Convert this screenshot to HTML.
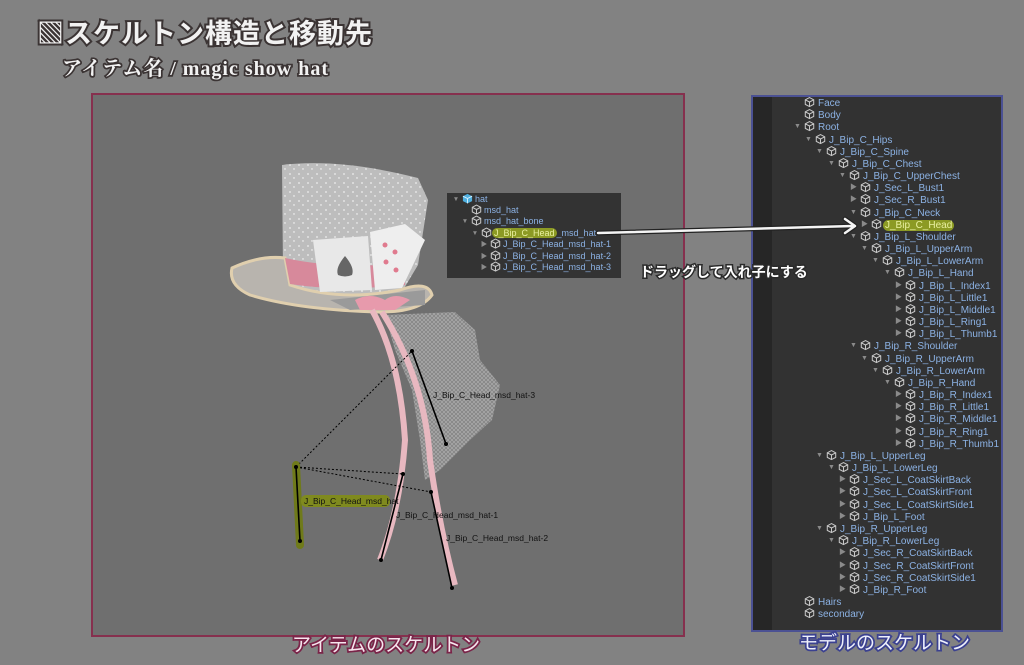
<!DOCTYPE html>
<html><head><meta charset="utf-8"><style>
*{margin:0;padding:0;box-sizing:border-box}
body{width:1024px;height:665px;background:#828282;position:relative;overflow:hidden;font-family:"Liberation Sans","Noto Sans CJK JP",sans-serif}
.abs{position:absolute}
.t{position:absolute;white-space:nowrap;font-family:"Liberation Sans","Noto Sans CJK JP",sans-serif;paint-order:stroke fill}
.r{position:absolute;height:12px;line-height:12px;font-size:10px;color:#8cb2e4;white-space:nowrap}
.r b{position:absolute;left:0;top:0;width:9px;height:12px;line-height:12px;font-size:7px;color:#8a8a8a;font-weight:normal;text-align:center}
.r svg{position:absolute;left:11px;top:-1px;width:11px;height:12px;display:block}
.r span{position:absolute;left:25px;top:1px}
.s{position:absolute;height:11px;line-height:11px;font-size:9px;color:#8cb2e4;white-space:nowrap}
.s b{position:absolute;left:0;top:0;width:8px;font-size:6.5px;color:#8a8a8a;font-weight:normal;text-align:center}
.s svg{position:absolute;left:10px;top:-1px;width:11px;height:11px;display:block}
.s span{position:absolute;left:23px;top:0}
.hl{background:#8c9a24;color:#e9f0a0;border-radius:6px;padding:0 2px;margin-left:-2px}
.s .hl,.r .hl{position:static}
</style></head><body>
<svg width="0" height="0" style="position:absolute"><defs>
<symbol id="c" viewBox="0 0 12 12"><path d="M6 1.2 L10.6 3.6 V8.6 L6 11 L1.4 8.6 V3.6 Z M1.4 3.6 L6 6 L10.6 3.6 M6 6 V11" fill="none" stroke="#c8c8c8" stroke-width="1.1"/></symbol>
<symbol id="h" viewBox="0 0 12 12"><path d="M6 1 L11 3.5 V8.8 L6 11.3 L1 8.8 V3.5 Z" fill="#4fb0e0"/><path d="M1 3.5 L6 6 L11 3.5 M6 6 V11.3" fill="none" stroke="#d9f2ff" stroke-width="1"/></symbol>
</defs></svg>

<div class="t" style="left:37px;top:12px;font-size:27px;letter-spacing:1px;color:#f2f2f2;-webkit-text-stroke:4px #3b3434;font-weight:bold">▧スケルトン構造と移動先</div>
<div class="t" style="left:62px;top:52px;font-size:20px;letter-spacing:1px;color:#f2f2f2;-webkit-text-stroke:3.5px #3b3434;font-weight:bold;font-family:'Liberation Serif','Noto Serif CJK SC',serif">アイテム名 / magic show hat</div>

<div class="abs" style="left:91px;top:93px;width:594px;height:544px;background:#6f6f6f;border:2px solid #86304e"></div>

<div class="abs" style="left:751px;top:95px;width:252px;height:537px;background:#323232;border:2px solid #4b5193"></div>
<div class="abs" style="left:753px;top:97px;width:19px;height:533px;background:#262626"></div>

<svg class="abs" style="left:0;top:0" width="1024" height="665">
<defs><pattern id="net" width="4" height="4" patternUnits="userSpaceOnUse"><rect width="4" height="4" fill="#8a8a8a"/><path d="M0 0L4 4M4 0L0 4" stroke="#b8b8b8" stroke-width=".6"/></pattern>
<pattern id="sp" width="9" height="9" patternUnits="userSpaceOnUse"><rect width="9" height="9" fill="#bdbdbd"/><circle cx="2" cy="3" r=".9" fill="#eee"/><circle cx="6" cy="7" r=".7" fill="#fff"/></pattern></defs>
<path d="M385 315 L455 312 L475 330 L480 360 L500 385 L492 420 L470 440 L440 470 L425 480 L420 440 L412 390 L395 350 Z" fill="url(#net)" opacity=".9"/>
<path d="M282 165 Q340 158 418 178 L428 200 L418 265 L400 295 L300 300 L283 270 Z" fill="url(#sp)"/>
<path d="M232 268 Q260 255 285 258 L290 285 Q340 302 400 290 Q428 280 432 295 Q420 312 380 312 Q300 310 250 295 Q228 285 232 268 Z" fill="#b8b4ae" stroke="#e0cfae" stroke-width="3"/>
<path d="M285 258 Q340 270 405 263 L405 285 Q340 292 290 284 Z" fill="#d7899b"/>
<path d="M313 240 L368 236 L372 290 L320 292 Z" fill="#e8e8e8"/>
<path d="M370 232 L405 224 L425 240 L402 288 L375 290 Z" fill="#eee"/>
<path d="M345 256 Q335 268 338 275 Q345 278 352 275 Q355 268 345 256 Z" fill="#666"/>
<g fill="#e07a8e"><circle cx="385" cy="245" r="2.5"/><circle cx="395" cy="252" r="2.5"/><circle cx="386" cy="262" r="2.5"/><circle cx="396" cy="270" r="2.5"/></g>
<path d="M330 300 L425 290 L425 305 L350 310 Z" fill="#9a9a9a"/>
<path d="M355 300 Q370 292 385 300 Q395 292 410 300 L395 310 L360 310 Z" fill="#e79aac"/>
<path d="M372 310 Q400 360 405 440 Q400 510 380 560" fill="none" stroke="#e8b8c0" stroke-width="6"/>
<path d="M382 312 Q425 380 430 460 Q440 530 455 585" fill="none" stroke="#e8b8c0" stroke-width="6"/>
<g stroke="#000" fill="none">
<path d="M296 467 L412 351 M296 467 L403 474 M296 467 L431 492" stroke-dasharray="2 2" stroke-width="1"/>
<path d="M296 465 L300 545" stroke="#6f7a1a" stroke-width="8" stroke-linecap="round"/>
<path d="M296 467 L300 541 M412 351 L446 444 M403 474 L381 560 M431 492 L452 588" stroke-width="1.6"/>
</g>
<g fill="#000"><circle cx="296" cy="467" r="2"/><circle cx="300" cy="541" r="2"/><circle cx="412" cy="351" r="2"/><circle cx="446" cy="444" r="2"/><circle cx="403" cy="474" r="2"/><circle cx="381" cy="560" r="2"/><circle cx="431" cy="492" r="2"/><circle cx="452" cy="588" r="2"/></g>
<rect x="301" y="495" width="89" height="12" rx="5" fill="#7f8a1e"/>
<g font-family="Liberation Sans" font-size="8.5" fill="#111">
<text x="304" y="504">J_Bip_C_Head_msd_hat</text>
<text x="433" y="398">J_Bip_C_Head_msd_hat-3</text>
<text x="396" y="518">J_Bip_C_Head_msd_hat-1</text>
<text x="446" y="541">J_Bip_C_Head_msd_hat-2</text>
</g>
</svg>

<div class="abs" style="left:447px;top:193px;width:174px;height:85px;background:#333"></div>
<div class="s" style="top:193.5px;left:452px"><b>▼</b><svg><use href="#h"/></svg><span>hat</span></div>
<div class="s" style="top:205px;left:461px"><svg><use href="#c"/></svg><span>msd_hat</span></div>
<div class="s" style="top:216.4px;left:461px"><b>▼</b><svg><use href="#c"/></svg><span>msd_hat_bone</span></div>
<div class="s" style="top:227.8px;left:471px"><b>▼</b><svg><use href="#c"/></svg><span><span class="hl">J_Bip_C_Head</span>_msd_hat</span></div>
<div class="s" style="top:239.2px;left:480px"><b>▶</b><svg><use href="#c"/></svg><span>J_Bip_C_Head_msd_hat-1</span></div>
<div class="s" style="top:250.6px;left:480px"><b>▶</b><svg><use href="#c"/></svg><span>J_Bip_C_Head_msd_hat-2</span></div>
<div class="s" style="top:262px;left:480px"><b>▶</b><svg><use href="#c"/></svg><span>J_Bip_C_Head_msd_hat-3</span></div>

<div class="r" style="top:97px;left:793px"><svg><use href="#c"/></svg><span>Face</span></div>
<div class="r" style="top:109.2px;left:793px"><svg><use href="#c"/></svg><span>Body</span></div>
<div class="r" style="top:121.3px;left:793px"><b>▼</b><svg><use href="#c"/></svg><span>Root</span></div>
<div class="r" style="top:133.5px;left:804px"><b>▼</b><svg><use href="#c"/></svg><span>J_Bip_C_Hips</span></div>
<div class="r" style="top:145.7px;left:815px"><b>▼</b><svg><use href="#c"/></svg><span>J_Bip_C_Spine</span></div>
<div class="r" style="top:157.9px;left:827px"><b>▼</b><svg><use href="#c"/></svg><span>J_Bip_C_Chest</span></div>
<div class="r" style="top:170px;left:838px"><b>▼</b><svg><use href="#c"/></svg><span>J_Bip_C_UpperChest</span></div>
<div class="r" style="top:182.2px;left:849px"><b>▶</b><svg><use href="#c"/></svg><span>J_Sec_L_Bust1</span></div>
<div class="r" style="top:194.4px;left:849px"><b>▶</b><svg><use href="#c"/></svg><span>J_Sec_R_Bust1</span></div>
<div class="r" style="top:206.5px;left:849px"><b>▼</b><svg><use href="#c"/></svg><span>J_Bip_C_Neck</span></div>
<div class="r" style="top:218.7px;left:860px"><b>▶</b><svg><use href="#c"/></svg><span><span class="hl">J_Bip_C_Head</span></span></div>
<div class="r" style="top:230.9px;left:849px"><b>▼</b><svg><use href="#c"/></svg><span>J_Bip_L_Shoulder</span></div>
<div class="r" style="top:243px;left:860px"><b>▼</b><svg><use href="#c"/></svg><span>J_Bip_L_UpperArm</span></div>
<div class="r" style="top:255.2px;left:871px"><b>▼</b><svg><use href="#c"/></svg><span>J_Bip_L_LowerArm</span></div>
<div class="r" style="top:267.4px;left:883px"><b>▼</b><svg><use href="#c"/></svg><span>J_Bip_L_Hand</span></div>
<div class="r" style="top:279.6px;left:894px"><b>▶</b><svg><use href="#c"/></svg><span>J_Bip_L_Index1</span></div>
<div class="r" style="top:291.7px;left:894px"><b>▶</b><svg><use href="#c"/></svg><span>J_Bip_L_Little1</span></div>
<div class="r" style="top:303.9px;left:894px"><b>▶</b><svg><use href="#c"/></svg><span>J_Bip_L_Middle1</span></div>
<div class="r" style="top:316.1px;left:894px"><b>▶</b><svg><use href="#c"/></svg><span>J_Bip_L_Ring1</span></div>
<div class="r" style="top:328.2px;left:894px"><b>▶</b><svg><use href="#c"/></svg><span>J_Bip_L_Thumb1</span></div>
<div class="r" style="top:340.4px;left:849px"><b>▼</b><svg><use href="#c"/></svg><span>J_Bip_R_Shoulder</span></div>
<div class="r" style="top:352.6px;left:860px"><b>▼</b><svg><use href="#c"/></svg><span>J_Bip_R_UpperArm</span></div>
<div class="r" style="top:364.7px;left:871px"><b>▼</b><svg><use href="#c"/></svg><span>J_Bip_R_LowerArm</span></div>
<div class="r" style="top:376.9px;left:883px"><b>▼</b><svg><use href="#c"/></svg><span>J_Bip_R_Hand</span></div>
<div class="r" style="top:389.1px;left:894px"><b>▶</b><svg><use href="#c"/></svg><span>J_Bip_R_Index1</span></div>
<div class="r" style="top:401.3px;left:894px"><b>▶</b><svg><use href="#c"/></svg><span>J_Bip_R_Little1</span></div>
<div class="r" style="top:413.4px;left:894px"><b>▶</b><svg><use href="#c"/></svg><span>J_Bip_R_Middle1</span></div>
<div class="r" style="top:425.6px;left:894px"><b>▶</b><svg><use href="#c"/></svg><span>J_Bip_R_Ring1</span></div>
<div class="r" style="top:437.8px;left:894px"><b>▶</b><svg><use href="#c"/></svg><span>J_Bip_R_Thumb1</span></div>
<div class="r" style="top:449.9px;left:815px"><b>▼</b><svg><use href="#c"/></svg><span>J_Bip_L_UpperLeg</span></div>
<div class="r" style="top:462.1px;left:827px"><b>▼</b><svg><use href="#c"/></svg><span>J_Bip_L_LowerLeg</span></div>
<div class="r" style="top:474.3px;left:838px"><b>▶</b><svg><use href="#c"/></svg><span>J_Sec_L_CoatSkirtBack</span></div>
<div class="r" style="top:486.4px;left:838px"><b>▶</b><svg><use href="#c"/></svg><span>J_Sec_L_CoatSkirtFront</span></div>
<div class="r" style="top:498.6px;left:838px"><b>▶</b><svg><use href="#c"/></svg><span>J_Sec_L_CoatSkirtSide1</span></div>
<div class="r" style="top:510.8px;left:838px"><b>▶</b><svg><use href="#c"/></svg><span>J_Bip_L_Foot</span></div>
<div class="r" style="top:523px;left:815px"><b>▼</b><svg><use href="#c"/></svg><span>J_Bip_R_UpperLeg</span></div>
<div class="r" style="top:535.1px;left:827px"><b>▼</b><svg><use href="#c"/></svg><span>J_Bip_R_LowerLeg</span></div>
<div class="r" style="top:547.3px;left:838px"><b>▶</b><svg><use href="#c"/></svg><span>J_Sec_R_CoatSkirtBack</span></div>
<div class="r" style="top:559.5px;left:838px"><b>▶</b><svg><use href="#c"/></svg><span>J_Sec_R_CoatSkirtFront</span></div>
<div class="r" style="top:571.6px;left:838px"><b>▶</b><svg><use href="#c"/></svg><span>J_Sec_R_CoatSkirtSide1</span></div>
<div class="r" style="top:583.8px;left:838px"><b>▶</b><svg><use href="#c"/></svg><span>J_Bip_R_Foot</span></div>
<div class="r" style="top:596px;left:793px"><svg><use href="#c"/></svg><span>Hairs</span></div>
<div class="r" style="top:608.1px;left:793px"><svg><use href="#c"/></svg><span>secondary</span></div>

<svg class="abs" style="left:0;top:0" width="1024" height="665">
<g fill="none" stroke-linecap="round" stroke-linejoin="round">
<path d="M598 233 L853 226 M845 219 L855 226 L845 233" stroke="#222" stroke-width="5"/>
<path d="M598 233 L853 226 M845 219 L855 226 L845 233" stroke="#f4f4f4" stroke-width="2.5"/>
</g>
</svg>
<div class="t" style="left:640px;top:262px;font-size:14px;color:#fff;-webkit-text-stroke:3px #2a2a2a;font-weight:bold">ドラッグして入れ子にする</div>

<div class="t" style="left:292px;top:630px;font-size:19px;color:#f6e6ee;-webkit-text-stroke:3.5px #7a2448">アイテムのスケルトン</div>
<div class="t" style="left:799px;top:628px;font-size:19px;color:#eef0fb;-webkit-text-stroke:3.5px #3b4190">モデルのスケルトン</div>
</body></html>
